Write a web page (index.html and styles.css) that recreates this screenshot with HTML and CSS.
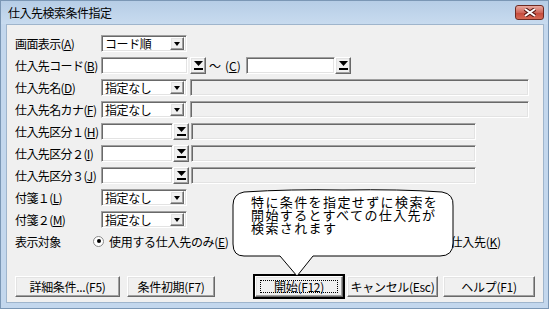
FILE: index.html
```html
<!DOCTYPE html>
<html lang="ja">
<head>
  <meta charset="UTF-8" />
  <title>仕入先検索条件指定</title>
  <link rel="stylesheet" href="styles.css">
</head>
<body>
  <div class="window">
    <div class="titlebar">
      <span class="title">仕入先検索条件指定</span>
      <span class="close">
        <svg width="14" height="9" viewBox="0 0 14 9">
          <path d="M2 1 L12 8 M12 1 L2 8" stroke="#5a1a14" stroke-width="4" />
          <path d="M2 1 L12 8 M12 1 L2 8" stroke="#fff" stroke-width="2" />
        </svg>
      </span>
    </div>

    <div class="client">
      <div class="form">
        <!-- 画面表示 -->
        <div class="row">
          <label class="lbl">画面表示(<u>A</u>)</label>
          <div class="combo sunken w86"><span class="val">コード順</span><span class="drop raised"></span></div>
        </div>

        <!-- 仕入先コード -->
        <div class="row">
          <label class="lbl">仕入先コード(<u>B</u>)</label>
          <div class="input sunken w87"></div>
          <span class="pick raised ml2"><svg width="9" height="9" viewBox="0 0 9 9"><path d="M0 0 H9 L4.5 5 Z" /><rect x="0" y="7" width="9" height="2" /></svg></span>
          <span class="tilde">〜</span>
          <span class="sub">(<u>C</u>)</span>
          <div class="input sunken w89"></div>
          <span class="pick raised"><svg width="9" height="9" viewBox="0 0 9 9"><path d="M0 0 H9 L4.5 5 Z" /><rect x="0" y="7" width="9" height="2" /></svg></span>
        </div>

        <!-- 仕入先名 -->
        <div class="row">
          <label class="lbl">仕入先名(<u>D</u>)</label>
          <div class="combo sunken w86"><span class="val">指定なし</span><span class="drop raised"></span></div>
          <div class="readonly sunken wide"></div>
        </div>

        <div class="row">
          <label class="lbl">仕入先名カナ(<u>F</u>)</label>
          <div class="combo sunken w86"><span class="val">指定なし</span><span class="drop raised"></span></div>
          <div class="readonly sunken wide"></div>
        </div>

        <!-- 仕入先区分 -->
        <div class="row">
          <label class="lbl">仕入先区分１(<u>H</u>)</label>
          <div class="input sunken w72"></div>
          <span class="pick raised"><svg width="9" height="9" viewBox="0 0 9 9"><path d="M0 0 H9 L4.5 5 Z" /><rect x="0" y="7" width="9" height="2" /></svg></span>
          <div class="readonly sunken mid"></div>
        </div>

        <div class="row">
          <label class="lbl">仕入先区分２(<u>I</u>)</label>
          <div class="input sunken w72"></div>
          <span class="pick raised"><svg width="9" height="9" viewBox="0 0 9 9"><path d="M0 0 H9 L4.5 5 Z" /><rect x="0" y="7" width="9" height="2" /></svg></span>
          <div class="readonly sunken mid"></div>
        </div>

        <div class="row">
          <label class="lbl">仕入先区分３(<u>J</u>)</label>
          <div class="input sunken w72"></div>
          <span class="pick raised"><svg width="9" height="9" viewBox="0 0 9 9"><path d="M0 0 H9 L4.5 5 Z" /><rect x="0" y="7" width="9" height="2" /></svg></span>
          <div class="readonly sunken mid"></div>
        </div>

        <!-- 付箋 -->
        <div class="row">
          <label class="lbl">付箋１(<u>L</u>)</label>
          <div class="combo sunken w86"><span class="val">指定なし</span><span class="drop raised"></span></div>
        </div>

        <div class="row">
          <label class="lbl">付箋２(<u>M</u>)</label>
          <div class="combo sunken w86"><span class="val">指定なし</span><span class="drop raised"></span></div>
        </div>

        <!-- 表示対象 -->
        <div class="row">
          <label class="lbl short">表示対象</label>
          <span class="radio"><span class="dot"></span></span>
          <span class="opt">使用する仕入先のみ(<u>E</u>)</span>
          <span class="opt opt2">仕入先(<u>K</u>)</span>
        </div>
      </div>

      <div class="buttons">
        <button class="btn raised b1">詳細条件...(F5)</button>
        <button class="btn raised b2">条件初期(F7)</button>
        <span class="default"><button class="btn raised b3"><span class="focus">開始(F12)</span></button></span>
        <button class="btn raised b4">キャンセル(Esc)</button>
        <button class="btn raised b5">ヘルプ(F1)</button>
      </div>
    </div>

    <!-- 吹き出し -->
    <div class="balloon">
      <svg width="232" height="96" viewBox="0 0 232 96">
        <path d="M14 4 Q60 1 113 2 Q170 1 212 4 Q224 6 223 18 L223 55 Q223 68 210 68 L83 68 L67 88 L50 68 L14 68 Q3 68 3 56 L3 17 Q3 6 14 4 Z"
              fill="#fff" stroke="#000" stroke-width="1" />
      </svg>
      <p class="note">特に条件を指定せずに検索を<br>開始するとすべての仕入先が<br>検索されます</p>
    </div>
  </div>
</body>
</html>
```

FILE: styles.css
```css
* {
  box-sizing: border-box;
}

body {
  margin: 0;
  font-family: "Noto Sans CJK JP", "Noto Sans", sans-serif;
  font-size: 12px;
  color: #000;
}

.window {
  position: relative;
  width: 549px;
  height: 309px;
  display: flex;
  flex-direction: column;
  background: #c3d7ed;
  border: 1px solid #7b97b5;
  padding: 0 4px 5px 5px;
  overflow: hidden;
}

.titlebar {
  height: 23px;
  display: flex;
  align-items: center;
  justify-content: space-between;
  background: linear-gradient(#b6cde6, #c8dbef);
  margin: 0 -4px 0 -5px;
  padding: 0 4px 0 6px;
}

.title {
  font-size: 12px;
  letter-spacing: -0.5px;
  margin-left: 1px;
}

.close {
  width: 29px;
  height: 15px;
  display: flex;
  align-items: center;
  justify-content: center;
  background: linear-gradient(#e9a99f, #d0675a 50%, #c4483a 51%, #d66a55);
  border: 1px solid #6e2a22;
  border-radius: 3px;
}

.client {
  flex: 1;
  background: #f0f0f0;
  border: 1px solid #9fb5cc;
  padding: 7px 8px 0 8px;
}

.row {
  height: 22px;
  display: flex;
  align-items: center;
}

.lbl {
  width: 86px;
  white-space: nowrap;
  letter-spacing: -0.6px;
}

.lbl.short {
  width: 78px;
}

u {
  text-decoration: underline;
  text-underline-offset: 1px;
}

/* 3D borders */
.sunken {
  border: 1px solid;
  border-color: #a0a0a0 #fff #fff #a0a0a0;
  box-shadow: inset 1px 1px 0 #696969, inset -1px -1px 0 #e3e3e3;
}

.raised {
  background: #f0f0f0;
  border: 1px solid;
  border-color: #fff #696969 #696969 #fff;
  box-shadow: inset -1px -1px 0 #a0a0a0, inset 1px 1px 0 #e3e3e3;
}

.combo,
.input {
  height: 17px;
  background: #fff;
}

.combo {
  display: flex;
  align-items: center;
  justify-content: space-between;
  padding: 2px 2px 2px 3px;
}

.val {
  letter-spacing: -0.4px;
  line-height: 13px;
}

.drop {
  width: 14px;
  height: 13px;
  position: relative;
}

.drop::after {
  content: "";
  position: absolute;
  left: 3px;
  top: 4px;
  border-left: 3.5px solid transparent;
  border-right: 3.5px solid transparent;
  border-top: 4px solid #000;
}

.pick {
  width: 16px;
  height: 17px;
  display: flex;
  align-items: center;
  justify-content: center;
}

.pick svg {
  fill: #000;
}

.ml2 {
  margin-left: 2px;
}

.w86 { width: 86px; }
.w87 { width: 87px; }
.w89 { width: 89px; }
.w72 { width: 72px; }

.tilde {
  margin-left: 3px;
  width: 14px;
}

.sub {
  width: 21px;
  margin-left: 2px;
}

.readonly {
  height: 17px;
  background: #f0f0f0;
  margin-left: 3px;
}

.readonly.wide {
  width: 339px;
}

.readonly.mid {
  width: 285px;
  margin-left: 2px;
}

.radio {
  width: 11px;
  height: 11px;
  border-radius: 50%;
  background: #fff;
  border: 1px solid #8a8a8a;
  display: flex;
  align-items: center;
  justify-content: center;
}

.dot {
  width: 4px;
  height: 4px;
  border-radius: 50%;
  background: #000;
}

.opt {
  margin-left: 5px;
  letter-spacing: -0.3px;
}

.opt2 {
  margin-left: 222px;
}

/* bottom buttons */
.buttons {
  margin-top: 22px;
  height: 25px;
  display: flex;
  align-items: center;
}

.btn {
  height: 21px;
  padding: 0;
  font-family: inherit;
  font-size: 12px;
  color: #000;
  letter-spacing: -0.3px;
}

.b1 { width: 105px; }
.b2 { width: 88px; margin-left: 7px; }
.b3 { width: 88px; height: 21px; display: flex; align-items: center; justify-content: center; }
.b4 { width: 91px; margin-left: 2px; }
.b5 { width: 92px; margin-left: 5px; }

.default {
  margin-left: 38px;
  border: 2px solid #000;
  display: flex;
}

.focus {
  width: 78px;
  height: 13px;
  line-height: 12px;
  border: 1px dotted #000;
  text-align: center;
}

/* balloon */
.balloon {
  position: absolute;
  left: 229px;
  top: 187px;
  width: 232px;
  height: 96px;
}

.balloon svg {
  position: absolute;
  left: 0;
  top: 0;
}

.note {
  position: relative;
  margin: 0;
  padding: 7px 0 0 21px;
  font-size: 13px;
  line-height: 13px;
  letter-spacing: 1.4px;
}
```
